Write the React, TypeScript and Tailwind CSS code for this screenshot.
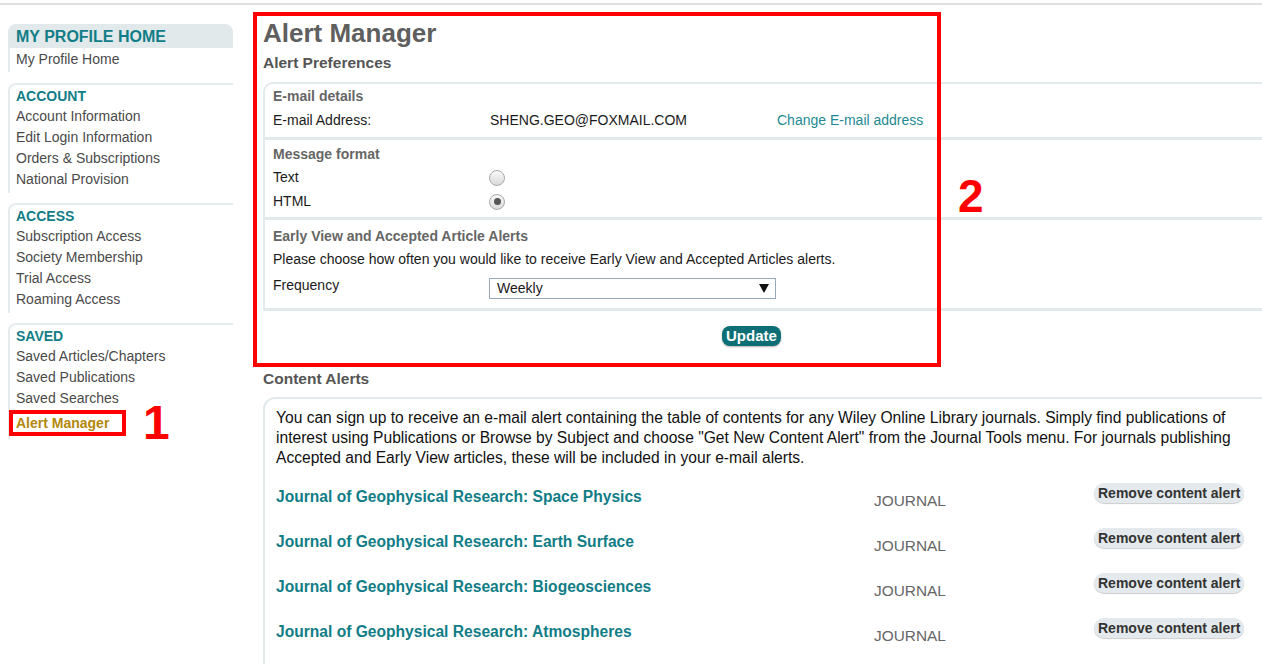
import React from "react";

const navSections = [
  {
    title: "ACCOUNT",
    items: ["Account Information", "Edit Login Information", "Orders & Subscriptions", "National Provision"],
  },
  {
    title: "ACCESS",
    items: ["Subscription Access", "Society Membership", "Trial Access", "Roaming Access"],
  },
];

const journals = ["Space Physics", "Earth Surface", "Biogeosciences", "Atmospheres"];

function NavSection({ title, items, children }: { title: string; items: string[]; children?: React.ReactNode }) {
  return (
    <div className="mb-[10px] border-t-2 border-l-2 border-[#e6ecee] rounded-tl-[8px] pl-[6px] pt-[1px] pb-[3px]">
      <div className="text-[14px] leading-[20px] font-bold text-[#117d87]">{title}</div>
      {items.map((item) => (
        <div key={item} className="text-[14px] leading-[21px] text-[#4a4a4a]">
          {item}
        </div>
      ))}
      {children}
    </div>
  );
}

function Radio({ checked }: { checked?: boolean }) {
  return (
    <div className="w-[16px] h-[16px] rounded-full border border-[#a9a9a9] bg-gradient-to-b from-[#fafafa] to-[#d9d9d9] flex items-center justify-center">
      {checked && <div className="w-[7px] h-[7px] rounded-full bg-[#555]" />}
    </div>
  );
}

export default function App() {
  return (
    <div className="relative w-[1262px] h-[664px] overflow-hidden bg-white font-['Liberation_Sans',Arial,sans-serif]">
      {/* top rule */}
      <div className="h-[5px] border-b-2 border-[#e0e0e0]" />

      <div className="flex">
        {/* Sidebar */}
        <aside className="w-[225px] ml-[8px] shrink-0">
          <div className="mt-[19px] h-[24px] bg-[#e2e9eb] rounded-t-[8px] pl-[8px] text-[16px] leading-[25px] font-bold text-[#117d87]">
            MY PROFILE HOME
          </div>
          <div className="h-[24px] border-l-2 border-[#e6ecee] pl-[6px] text-[14px] leading-[22px] text-[#4a4a4a]">
            My Profile Home
          </div>
          <div className="mt-[11px]">
            {navSections.map((s) => (
              <NavSection key={s.title} title={s.title} items={s.items} />
            ))}
            <NavSection title="SAVED" items={["Saved Articles/Chapters", "Saved Publications", "Saved Searches"]}>
              <div className="-ml-[7px] mt-[1px] w-[117px] border-4 border-[#ff0000] pl-[3px] text-[14px] leading-[18px] font-bold text-[#b3880c]">
                Alert Manager
              </div>
            </NavSection>
          </div>
        </aside>

        {/* Main */}
        <main className="ml-[30px] flex-1 pt-[13px]">
          <h1 className="text-[26px] leading-[30px] font-bold text-[#5f5f5f]">Alert Manager</h1>
          <h2 className="mt-[5px] text-[15.5px] leading-[20px] font-bold text-[#555]">Alert Preferences</h2>

          <div className="mt-[9px] border-t-2 border-l-2 border-[#e3eaec] rounded-tl-[10px]">
            {/* E-mail details */}
            <div className="border-b-[3px] border-[#e3eaec] pl-[8px] pt-[3px] pb-[7px]">
              <div className="text-[14px] leading-[18px] font-bold text-[#666]">E-mail details</div>
              <div className="mt-[5px] grid grid-cols-[217px_287px_1fr] text-[14px] leading-[20px] text-[#1a1a1a]">
                <div>E-mail Address:</div>
                <div>SHENG.GEO@FOXMAIL.COM</div>
                <div className="text-[#238a93]">Change E-mail address</div>
              </div>
            </div>

            {/* Message format */}
            <div className="border-b-[3px] border-[#e3eaec] pl-[8px] pt-[5px] pb-[4px]">
              <div className="text-[14px] leading-[18px] font-bold text-[#666]">Message format</div>
              <div className="mt-[2px]">
                <div className="grid grid-cols-[216px_287px] items-center h-[24px] text-[14px] text-[#1a1a1a]">
                  <div>Text</div>
                  <div className="pt-[1px]">
                    <Radio />
                  </div>
                </div>
                <div className="grid grid-cols-[216px_287px] items-center h-[24px] text-[14px] text-[#1a1a1a]">
                  <div>HTML</div>
                  <div className="pt-[1px]">
                    <Radio checked />
                  </div>
                </div>
              </div>
            </div>

            {/* Early view */}
            <div className="border-b-[3px] border-[#e3eaec] pl-[8px] pt-[7px] pb-[9px]">
              <div className="text-[14px] leading-[18px] font-bold text-[#666]">Early View and Accepted Article Alerts</div>
              <div className="mt-[4px] text-[14px] leading-[20px] text-[#1a1a1a]">
                Please choose how often you would like to receive Early View and Accepted Articles alerts.
              </div>
              <div className="mt-[6px] grid grid-cols-[216px_287px] items-start text-[14px] text-[#1a1a1a]">
                <div className="leading-[20px]">Frequency</div>
                <div className="mt-[3px] h-[21px] border border-[#97a9bb] bg-white flex items-center justify-between pl-[7px] pr-[6px] leading-[19px]">
                  <span>Weekly</span>
                  <svg width="10" height="9" viewBox="0 0 10 9">
                    <path d="M0 0 H10 L5 9 Z" fill="#111" />
                  </svg>
                </div>
              </div>
            </div>
          </div>

          <div className="mt-[13px] pl-[459px]">
            <button className="h-[20px] px-[4px] rounded-[8px] bg-[#0d6e76] text-white text-[15px] leading-[20px] font-bold shadow-[0_1px_2px_rgba(0,0,0,0.3)]">
              Update
            </button>
          </div>

          <h2 className="mt-[21px] text-[15.5px] leading-[20px] font-bold text-[#555]">Content Alerts</h2>

          <div className="mt-[8px] border-t-2 border-l-2 border-[#e3eaec] rounded-tl-[12px] pl-[11px] pt-[9px] pr-[14px] pb-[20px]">
            <p className="text-[15.6px] leading-[20px] text-[#111]">
              You can sign up to receive an e-mail alert containing the table of contents for any Wiley Online Library journals. Simply find publications of interest using Publications or Browse by Subject and choose "Get New Content Alert" from the Journal Tools menu. For journals publishing Accepted and Early View articles, these will be included in your e-mail alerts.
            </p>
            <div className="mt-[17px]">
              {journals.map((j) => (
                <div key={j} className="flex items-start h-[45px]">
                  <div className="w-[598px] shrink-0 mt-[2px] text-[15.6px] leading-[20px] font-bold text-[#117d87]">
                    Journal of Geophysical Research: {j}
                  </div>
                  <div className="w-[220px] shrink-0 mt-[6px] text-[15.4px] leading-[20px] text-[#666]">JOURNAL</div>
                  <button className="shrink-0 whitespace-nowrap -mt-[2px] h-[20px] px-[4px] rounded-full bg-[#e3e9ec] text-[14px] leading-[17px] font-bold text-[#333] shadow-[0_1px_1px_rgba(0,0,0,0.2)]">
                    Remove content alert
                  </button>
                </div>
              ))}
            </div>
          </div>
        </main>
      </div>

      {/* annotations */}
      <div className="absolute left-[253px] top-[12px] w-[688px] h-[355px] border-4 border-[#ff0000] pointer-events-none" />
      <div className="absolute left-[958px] top-[173px] text-[46px] leading-[46px] font-bold text-[#ff0000]">2</div>
      <div className="absolute left-[143px] top-[399px] text-[48px] leading-[48px] font-bold text-[#ff0000]">1</div>
    </div>
  );
}
